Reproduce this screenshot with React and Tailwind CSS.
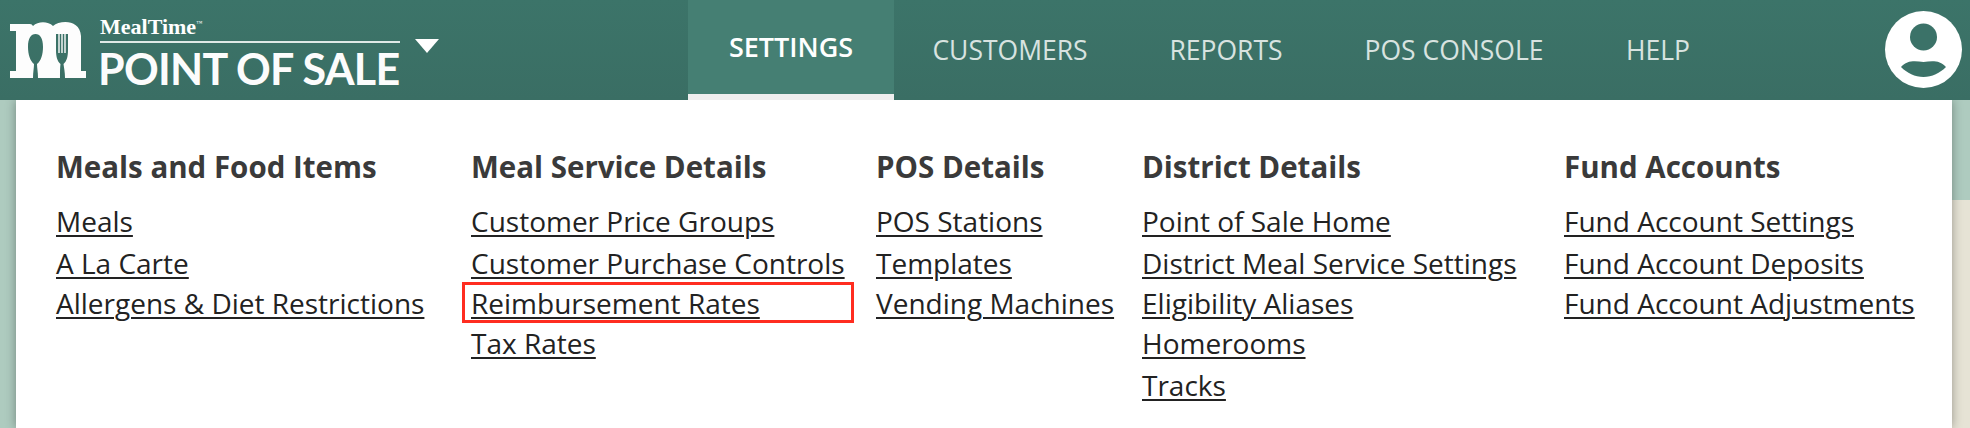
const columns = [
  { title: "Meals and Food Items", w: "w-[415px]", links: ["Meals", "A La Carte", "Allergens & Diet Restrictions"] },
  { title: "Meal Service Details", w: "w-[405px]", links: ["Customer Price Groups", "Customer Purchase Controls", "Reimbursement Rates", "Tax Rates"], boxed: "Reimbursement Rates" },
  { title: "POS Details", w: "w-[266px]", links: ["POS Stations", "Templates", "Vending Machines"] },
  { title: "District Details", w: "w-[422px]", links: ["Point of Sale Home", "District Meal Service Settings", "Eligibility Aliases", "Homerooms", "Tracks"] },
  { title: "Fund Accounts", w: "w-[350px]", links: ["Fund Account Settings", "Fund Account Deposits", "Fund Account Adjustments"] },
];
const rowH = ["h-[42px]", "h-[40px]", "h-[40px]", "h-[42px]", "h-[42px]"];
const nav = [
  { t: "CUSTOMERS", w: "w-[232px]" },
  { t: "REPORTS", w: "w-[200px]" },
  { t: "POS CONSOLE", w: "w-[256px]" },
  { t: "HELP", w: "w-[152px]" },
];
const font = { fontFamily: '"Open Sans", sans-serif' };

function Logo() {
  return (
    <svg width="78" height="58" viewBox="0 0 78 58" className="shrink-0">
      <path fillRule="evenodd" fill="#fdfdfd" d="M0 2 H20 Q22 2 23 4 C28 -1 38 -1 43 4 C50 -2 70 -3 71 14 V49 H76 V56 H55 C55 50 54 46 53.5 42 C57 39 58 34 58 28 V12 H46 V28 C46 34 47 39 50.5 42 C50 46 50 50 50 56 H28 C28 50 27 46 27 42 C31 39 33 32 33 25 C33 16 30 12 25.5 12 C21 12 18 16 18 25 C18 32 20 39 24 42 C24 46 23 50 23 56 H0 V49 H6 V9 H0 Z" />
      <path fill="none" stroke="#fdfdfd" strokeWidth="1.4" d="M49 12 V31 M52 12 V31 M55 12 V31" />
    </svg>
  );
}

export default function App() {
  return (
    <div className="relative w-[1970px] h-[428px] overflow-hidden bg-[#aecbbf]" style={font}>
      <header className="relative z-10 flex h-[100px] bg-gradient-to-b from-[#3c7469] to-[#3a6e64]">
        <div className="w-[688px] flex items-start pl-[10px] pt-[22px]">
          <Logo />
          <div className="ml-[12px] w-[300px] -mt-[7px]">
            <div className="h-[26px] text-[22px] leading-[24px] font-bold text-white whitespace-nowrap" style={{ fontFamily: '"Liberation Serif", serif' }}>MealTime<span className="align-top text-[6px] leading-[16px] font-normal">™</span></div>
            <div className="h-[2px] bg-[#dfe9e6]"></div>
            <div className="whitespace-nowrap -ml-[2px] text-[43px] leading-[44px] font-bold text-[#fcfcfc] tracking-[-0.7px] mt-[4px]" style={{ fontFamily: '"Lato", sans-serif' }}>POINT OF SALE</div>
          </div>
          <div className="ml-[15px] mt-[17px] h-0 w-0 border-x-[12px] border-t-[14px] border-x-transparent border-t-white"></div>
        </div>
        <div className="w-[206px] h-[100px] bg-[#457f73] border-b-[6px] border-[#eeeeee] flex items-center justify-center text-[27px] font-semibold text-white">SETTINGS</div>
        <nav className="flex">
          {nav.map((n) => (
            <div key={n.t} className={`${n.w} flex items-center justify-center pt-[2px] text-[26.5px] font-medium text-[#d8e3e0]`}>{n.t}</div>
          ))}
        </nav>
        <div className="ml-[151px] mt-[11px] w-[77px] h-[77px] rounded-full bg-white">
          <svg viewBox="0 0 77 77" width="77" height="77">
            <circle cx="38.5" cy="26" r="13.5" fill="#3b7268" />
            <path fill="#3b7268" d="M16 56 C22 49 30 50 38.5 51 C47 50 55 49 61 56 C55 62 47 66 38.5 66 C30 66 22 62 16 56 Z" />
          </svg>
        </div>
      </header>
      <div className="absolute right-0 top-[200px] bottom-0 w-[18px] bg-[#e6e3d5]"></div>
      <main className="relative ml-[16px] w-[1936px] h-[328px] bg-white flex pl-[40px] pt-[49px] text-[#222222] shadow-[0_0_10px_rgba(0,0,0,0.35)]">
        {columns.map((c) => (
          <section key={c.title} className={`${c.w} shrink-0`}>
            <h2 className="h-[36px] leading-[36px] text-[29.5px] font-bold text-[#3a3a3a] whitespace-nowrap">{c.title}</h2>
            <ul className="mt-[16px]">
              {c.links.map((l, i) => (
                <li key={l} className={`${rowH[i]} relative whitespace-nowrap text-[28px] leading-[40px]`}>
                  <a className="underline decoration-2 underline-offset-[3px]">{l}</a>
                  {c.boxed === l && <span className="absolute left-[-9px] top-[-1px] h-[41px] w-[392px] border-[3px] border-[#ff2d20]"></span>}
                </li>
              ))}
            </ul>
          </section>
        ))}
      </main>
    </div>
  );
}
